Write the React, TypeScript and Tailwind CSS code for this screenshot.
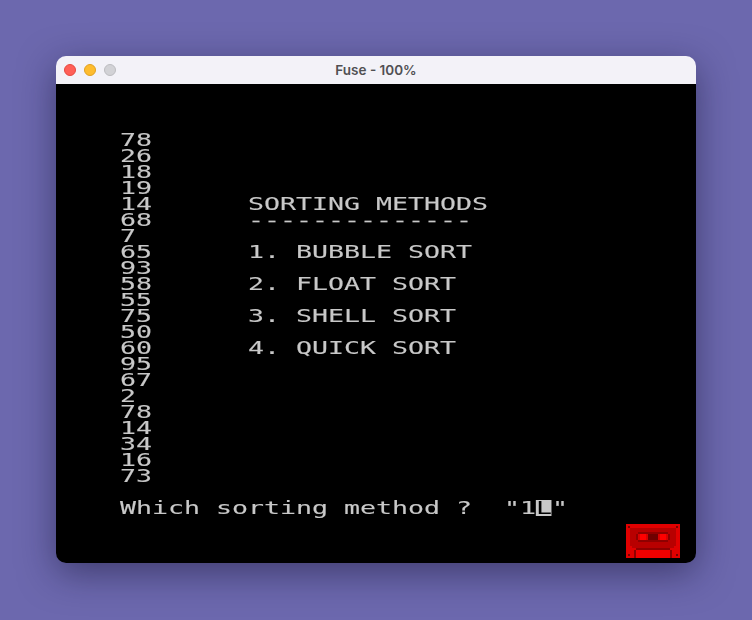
const NUMBERS = ['78', '26', '18', '19', '14', '68', '7', '65', '93', '58', '55', '75', '50', '60', '95', '67', '2', '78', '14', '34', '16', '73'];

// row index -> text, the rest of the rows in the menu column stay empty
const MENU: Record<number, string> = {
  4: 'SORTING METHODS',
  5: '--------------',
  7: '1. BUBBLE SORT',
  9: '2. FLOAT SORT',
  11: '3. SHELL SORT',
  13: '4. QUICK SORT',
};

// one character row of the Spectrum screen: 16px high, 16px per character
function Row({ children }: { children?: React.ReactNode }) {
  return (
    <div className="h-4 w-fit min-w-2 origin-left scale-x-[1.5633] whitespace-pre font-['DejaVu_Sans_Mono',monospace] text-[17px] leading-4 text-[#c8c8c8] will-change-transform [-webkit-text-stroke:0.12px_#c8c8c8]">
      {children}
    </div>
  );
}

function Cassette() {
  return (
    <svg viewBox="0 0 27 17" shapeRendering="crispEdges" className="absolute bottom-[5px] right-4 h-[34px] w-[54px]">
      <rect width="27" height="17" fill="#e00000" />
      <path d="M2 2h23v9h-1v1H3v-1H2z" fill="#b80000" />
      <path d="M6 4h15v1h1v3h-1v1H6V8H5V5h1z" fill="#8f0000" />
      <rect x="6" y="5" width="5" height="3" fill="#d80000" />
      <rect x="16" y="5" width="5" height="3" fill="#d80000" />
      <rect x="7" y="5" width="3" height="3" fill="#ff0000" />
      <rect x="17" y="5" width="3" height="3" fill="#ff0000" />
      <rect x="11" y="5" width="5" height="3" fill="#6e0000" />
      <path d="M5 12h17v1h1v4h-1v-4H5v4H4v-4h1z" fill="#8f0000" />
      <rect x="5" y="13" width="17" height="4" fill="#f00000" />
      <rect x="1" y="1" width="1" height="1" fill="#7a0000" />
      <rect x="25" y="1" width="1" height="1" fill="#7a0000" />
      <rect x="1" y="15" width="1" height="1" fill="#7a0000" />
      <rect x="25" y="15" width="1" height="1" fill="#7a0000" />
    </svg>
  );
}

export default function App() {
  return (
    <div className="h-[620px] w-[752px] overflow-hidden bg-[#6c68ae] px-14 pt-14">
      <div className="overflow-hidden rounded-[10px] shadow-[0_10px_36px_rgba(20,18,50,0.5)]">
        {/* title bar */}
        <div className="relative flex h-7 items-center justify-center bg-[#f3f2f8]">
          <div className="absolute left-2 flex gap-2">
            <span className="h-3 w-3 rounded-full border border-[#e5483f] bg-[#ff5f57]" />
            <span className="h-3 w-3 rounded-full border border-[#e0a020] bg-[#febc2e]" />
            <span className="h-3 w-3 rounded-full border border-[#bcbcc0] bg-[#d2d2d6]" />
          </div>
          <span className="font-['Inter',sans-serif] text-[13.5px] font-semibold text-[#505053]">Fuse - 100%</span>
        </div>

        {/* emulator screen */}
        <div className="relative h-[479px] bg-black pl-16 pt-12">
          <div className="flex">
            <div className="w-32">
              {NUMBERS.map((n, i) => (
                <Row key={i}>{n}</Row>
              ))}
            </div>
            <div>
              {NUMBERS.map((_, i) => (
                <Row key={i}>{MENU[i]}</Row>
              ))}
            </div>
          </div>
          <div className="mt-4">
            <Row>
              {'Which sorting method ?  "1'}
              <span className="inline-block h-4 bg-[#c8c8c8] align-top text-black [-webkit-text-stroke:0]">L</span>
              {'"'}
            </Row>
          </div>
          <Cassette />
        </div>
      </div>
    </div>
  );
}
